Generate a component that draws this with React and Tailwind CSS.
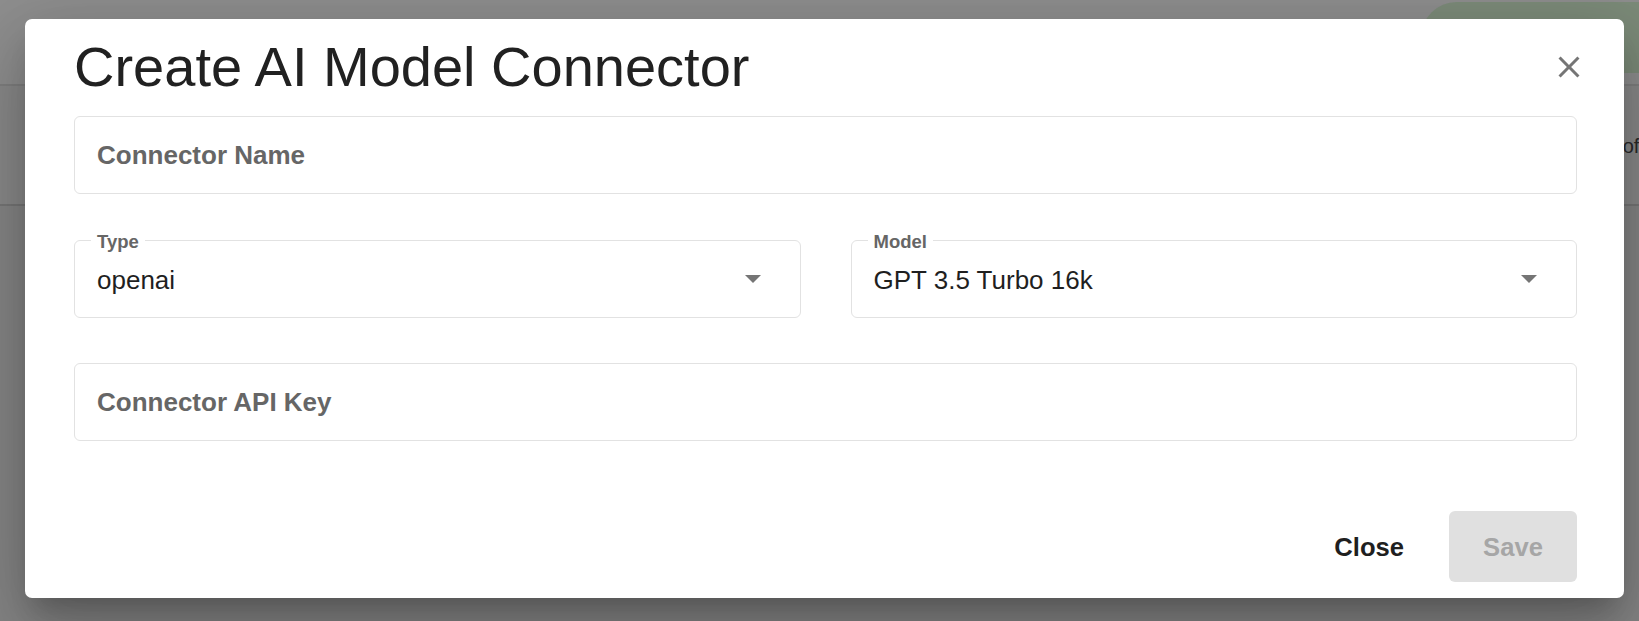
import React from 'react'

const font = { fontFamily: '"Liberation Sans", Arial, Helvetica, sans-serif' }

function ArrowDown() {
  return (
    <svg width="16" height="8" viewBox="0 0 16 8" className="shrink-0">
      <path d="M0 0 8 8 16 0z" fill="#757575" />
    </svg>
  )
}

function CloseIcon() {
  return (
    <svg width="36" height="36" viewBox="0 0 24 24">
      <path
        d="M19 6.41 17.59 5 12 10.59 6.41 5 5 6.41 10.59 12 5 17.59 6.41 19 12 13.41 17.59 19 19 17.59 13.41 12z"
        fill="#757575"
      />
    </svg>
  )
}

function TextField({ label }) {
  return (
    <div className="h-[78px] flex items-center pl-[22px] border-[1.5px] border-[#e2e2e2] rounded-[6px]">
      <span className="text-[26px] font-bold text-[#666666] pt-[1px]">{label}</span>
    </div>
  )
}

function SelectField({ label, value }) {
  return (
    <div className="relative flex-1 h-[78px] flex items-center justify-between pl-[22px] pr-[39px] border-[1.5px] border-[#e2e2e2] rounded-[6px]">
      <span className="absolute left-[16px] top-[-8px] px-[6px] bg-white text-[18.5px] leading-[18px] font-bold text-[#666666]">
        {label}
      </span>
      <span className="text-[26px] leading-[31px] pt-[2px] text-[#1f1f1f]">{value}</span>
      <ArrowDown />
    </div>
  )
}

export default function App() {
  return (
    <div className="relative w-[1639px] h-[621px] overflow-hidden bg-[#858585]" style={font}>
      {/* page behind the modal, dimmed */}
      <div className="h-[86px] bg-[#8e8e8e] border-b-2 border-[#7f7f7f] flex justify-end">
        <div className="w-[262px] h-[71px] mt-[2px] -mr-[44px] rounded-[36px] bg-[#7c8b79]" />
      </div>
      <div className="h-[120px] bg-[#898989] border-b-2 border-[#767676] flex items-center justify-end">
        <span className="text-[20px] text-[#2a2a2a] -mr-[17px] mt-[2px]">1–1 of 1</span>
      </div>

      {/* dialog */}
      <div className="absolute left-[25px] top-[19px] w-[1599px] h-[579px] bg-white rounded-[7px] pl-[49px] pr-[47px] pt-[15px] shadow-[0_18px_24px_-11px_rgba(0,0,0,0.2),0_38px_61px_5px_rgba(0,0,0,0.14),0_14px_74px_13px_rgba(0,0,0,0.12)]">
        <div className="flex justify-between items-start">
          <h2 className="text-[56px] leading-[66px] text-[#212121] font-normal">
            Create AI Model Connector
          </h2>
          <button className="mt-[15px] -mr-[10px]">
            <CloseIcon />
          </button>
        </div>

        <div className="mt-[16px]">
          <TextField label="Connector Name" />
        </div>

        <div className="mt-[46px] flex gap-[50px]">
          <SelectField label="Type" value="openai" />
          <SelectField label="Model" value="GPT 3.5 Turbo 16k" />
        </div>

        <div className="mt-[45px]">
          <TextField label="Connector API Key" />
        </div>

        <div className="mt-[70px] flex justify-end items-center gap-[32px]">
          <button className="px-[13px] h-[71px] pt-[2px] text-[25.6px] font-bold text-[#1f1f1f]">Close</button>
          <button
            disabled
            className="w-[128px] h-[71px] pt-[2px] rounded-[6px] bg-[#e0e0e0] text-[25.6px] font-bold text-[#a6a6a6]"
          >
            Save
          </button>
        </div>
      </div>
    </div>
  )
}
